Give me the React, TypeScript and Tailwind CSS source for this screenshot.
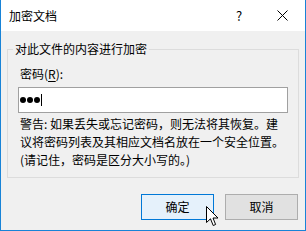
const FONT = "font-['Segoe_UI','Noto_Sans_CJK_SC','Noto_Sans',sans-serif]";

function CloseIcon() {
  return (
    <svg width="11" height="11" viewBox="0 0 11 11" className="block">
      <path d="M0.5 0.5 L10.5 10.5 M10.5 0.5 L0.5 10.5" stroke="#000" strokeWidth="1" fill="none" />
    </svg>
  );
}

function Cursor() {
  return (
    <svg width="13" height="21" viewBox="0 0 13 21" className="absolute left-[205px] top-[206px]">
      <path
        d="M0.5 0.5 L0.5 16.5 L4.5 12.8 L7.2 19.5 L9.6 18.5 L7 12 L12 12 Z"
        fill="#fff"
        stroke="#000"
        strokeWidth="1"
        strokeLinejoin="round"
      />
    </svg>
  );
}

export default function App() {
  return (
    <div className={`relative w-[306px] h-[231px] bg-[#f0f0f0] border-x border-b border-[#1883d7] text-[12px] text-black ${FONT}`}>
      {/* title bar */}
      <div className="flex h-[31px] items-center bg-white">
        <span className="pl-[8px] leading-[16px]">加密文档</span>
        <div className="ml-auto flex h-full">
          <div className="flex w-[46px] items-center justify-center pl-[6px] text-[13px]">?</div>
          <div className="flex w-[46px] items-center justify-center">
            <CloseIcon />
          </div>
        </div>
      </div>

      <div className="flex flex-col px-[6px] pr-[6px]">
        <fieldset className="mt-[10px] border border-[#dcdcdc]">
          <legend className="ml-[5px] px-[2px] leading-[16px]">对此文件的内容进行加密</legend>
          <div className="flex flex-col px-[10px] pt-[8px] pb-[8px]">
            <div className="pl-[2px] leading-[17px]">
              密码(<span className="underline underline-offset-2">R</span>):
            </div>
            <div className="mt-[5px] flex h-[26px] items-center border border-[#a0a0a0] bg-white pl-[1px]">
              <div className="flex items-center gap-[1px]">
                <span className="h-[6px] w-[6px] rounded-full bg-black" />
                <span className="h-[6px] w-[6px] rounded-full bg-black" />
                <span className="h-[6px] w-[6px] rounded-full bg-black" />
              </div>
              <span className="ml-[1px] h-[12px] w-[1px] bg-black" />
            </div>
            <div className="mt-[2px] pl-[2px] leading-[18px]">
              <div>警告: 如果丢失或忘记密码，则无法将其恢复。建</div>
              <div>议将密码列表及其相应文档名放在一个安全位置。</div>
              <div>(请记住，密码是区分大小写的。)</div>
            </div>
          </div>
        </fieldset>

        <div className="mt-[16px] flex justify-end gap-[11px] pr-[1px]">
          <button className="flex h-[26px] w-[73px] items-center justify-center border border-[#0078d7] bg-[#e5f1fb] leading-[16px]">
            确定
          </button>
          <button className="flex h-[26px] w-[73px] items-center justify-center border border-[#adadad] bg-[#e1e1e1] leading-[16px]">
            取消
          </button>
        </div>
      </div>

      <Cursor />
    </div>
  );
}
